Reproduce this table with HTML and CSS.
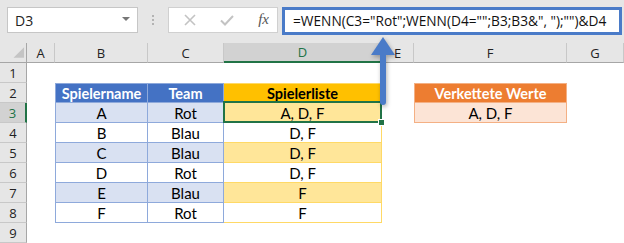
FILE: index.html
```html
<!DOCTYPE html>
<html lang="de">
<head>
    <meta charset="UTF-8">
    <title>WENN verketten</title>
    <link rel="stylesheet" href="styles.css">
</head>
<body>
    <div class="toolbar">
        <div class="namebox">
            <span>D3</span>
            <span class="caret"></span>
        </div>
        <div class="grip"><i></i><i></i><i></i></div>
        <div class="funcs">
            <svg width="12" height="12" viewBox="0 0 12 12"><path d="M1 1 L11 11 M11 1 L1 11" stroke="#c3c3c3" stroke-width="1.6" fill="none"/></svg>
            <svg width="14" height="11" viewBox="0 0 14 11"><path d="M1 5.5 L5 9.5 L13 1" stroke="#c3c3c3" stroke-width="2" fill="none"/></svg>
            <span class="fx">fx</span>
        </div>
        <div class="formula">=WENN(C3="Rot";WENN(D4="";B3;B3&amp;", ");"")&amp;D4</div>
    </div>

    <div class="sheet">
        <div class="corner"><svg width="27" height="20" viewBox="0 0 27 20"><polygon points="25,4 25,15 14,15" fill="#c4c4c4"/></svg></div>
        <div class="colhead">A</div>
        <div class="colhead">B</div>
        <div class="colhead">C</div>
        <div class="colhead active">D</div>
        <div class="colhead">E</div>
        <div class="colhead">F</div>
        <div class="colhead">G</div>

        <div class="rowhead">1</div>
        <div></div><div></div><div></div><div></div><div></div><div></div><div></div>

        <div class="rowhead">2</div>
        <div></div>
        <div class="t-blue head first top">Spielername</div>
        <div class="t-blue head top">Team</div>
        <div class="t-gold head top">Spielerliste</div>
        <div></div>
        <div class="t-orange head top">Verkettete Werte</div>
        <div></div>

        <div class="rowhead active">3</div>
        <div></div>
        <div class="t-blue band first">A</div>
        <div class="t-blue band">Rot</div>
        <div class="t-gold band current">A, D, F<span class="select"><span class="handle"></span></span></div>
        <div></div>
        <div class="t-orange">A, D, F</div>
        <div></div>

        <div class="rowhead">4</div>
        <div></div>
        <div class="t-blue first">B</div>
        <div class="t-blue">Blau</div>
        <div class="t-gold">D, F</div>
        <div></div><div></div><div></div>

        <div class="rowhead">5</div>
        <div></div>
        <div class="t-blue band first">C</div>
        <div class="t-blue band">Blau</div>
        <div class="t-gold band">D, F</div>
        <div></div><div></div><div></div>

        <div class="rowhead">6</div>
        <div></div>
        <div class="t-blue first">D</div>
        <div class="t-blue">Rot</div>
        <div class="t-gold">D, F</div>
        <div></div><div></div><div></div>

        <div class="rowhead">7</div>
        <div></div>
        <div class="t-blue band first">E</div>
        <div class="t-blue band">Blau</div>
        <div class="t-gold band">F</div>
        <div></div><div></div><div></div>

        <div class="rowhead">8</div>
        <div></div>
        <div class="t-blue first">F</div>
        <div class="t-blue">Rot</div>
        <div class="t-gold">F</div>
        <div></div><div></div><div></div>

        <div class="rowhead">9</div>
        <div></div><div></div><div></div><div></div><div></div><div></div><div></div>
    </div>

    <!-- Pfeil von der Formel zur Zelle D3 -->
    <svg class="arrow" width="30" height="74" viewBox="0 0 30 74">
        <polygon points="13,1 25,19 1,19" fill="#4a7bc8"/>
        <path d="M10 18 H16 V66 A3 3 0 0 1 10 66 Z" fill="#4a7bc8"/>
    </svg>
</body>
</html>
```

FILE: styles.css
```css
* {
    box-sizing: border-box;
}
body {
    margin: 0;
    width: 624px;
    height: 243px;
    overflow: hidden;
    position: relative;
    background: #fff;
    font-family: "Open Sans", "Noto Sans", sans-serif;
}

/* Namenfeld und Bearbeitungsleiste */
.toolbar {
    height: 43px;
    background: #e6e6e6;
    display: flex;
    align-items: flex-start;
    padding: 7px 0 0 7px;
}
.namebox {
    width: 131px;
    height: 26px;
    background: #fff;
    border: 1px solid #c6c6c6;
    display: flex;
    align-items: center;
    justify-content: space-between;
    padding: 0 7px 0 7px;
    font-size: 14px;
    color: #222;
}
.caret {
    width: 0;
    height: 0;
    border-left: 4px solid transparent;
    border-right: 4px solid transparent;
    border-top: 4px solid #777;
    margin-top: -3px;
}
.grip {
    width: 30px;
    height: 26px;
    display: flex;
    flex-direction: column;
    align-items: center;
    justify-content: center;
    gap: 2px;
}
.grip i {
    width: 2px;
    height: 2px;
    background: #b3b3b3;
}
.funcs {
    width: 110px;
    height: 26px;
    background: #fff;
    border: 1px solid #d0d0d0;
    display: flex;
    align-items: center;
    justify-content: space-between;
    padding: 0 8px 0 15px;
}
.fx {
    font-family: "Liberation Serif", serif;
    font-style: italic;
    font-size: 15px;
    color: #555;
    margin-top: -2px;
}
.formula {
    margin-left: 4px;
    width: 340px;
    height: 28px;
    background: #fff;
    border: 3px solid #4a7bc8;
    font-size: 13.7px;
    line-height: 22px;
    padding-left: 8px;
    color: #111;
    white-space: nowrap;
}

/* Tabellenblatt */
.sheet {
    display: grid;
    grid-template-columns: 27px 28px 93px 76px 158px 32px 153px 57px;
    grid-auto-rows: 20px;
    font-family: Lato, "Open Sans", sans-serif;
    font-size: 15px;
    color: #000;
}
.sheet > div {
    display: flex;
    align-items: center;
    justify-content: center;
    white-space: nowrap;
}
.corner {
    background: #e6e6e6;
    border-right: 1px solid #a6a6a6;
    border-bottom: 1px solid #a6a6a6;
}
.colhead {
    background: #e6e6e6;
    border-right: 1px solid #c8c8c8;
    border-bottom: 1px solid #a6a6a6;
    font-family: "Open Sans", sans-serif;
    font-size: 13px;
    color: #222;
}
.colhead.active {
    background: #d2d2d2;
    border-bottom: 2px solid #217346;
    color: #217346;
}
.rowhead {
    background: #e6e6e6;
    border-right: 1px solid #a6a6a6;
    border-bottom: 1px solid #c8c8c8;
    font-family: "Open Sans", sans-serif;
    font-size: 13px;
    color: #222;
}
.rowhead.active {
    background: #d2d2d2;
    border-right: 2px solid #217346;
    color: #217346;
}

/* Formatierte Tabellen */
.t-blue {
    border-right: 1px solid #8ea9db;
    border-bottom: 1px solid #8ea9db;
}
.t-blue.first {
    border-left: 1px solid #8ea9db;
}
.t-blue.band {
    background: #d9e1f2;
}
.t-blue.head {
    background: #4472c4;
    color: #fff;
}
.t-gold {
    border-right: 1px solid #ffd966;
    border-bottom: 1px solid #ffd966;
}
.t-gold.band {
    background: #ffe699;
}
.t-gold.head {
    background: #ffc000;
}
.t-orange {
    background: #fce4d6;
    border: 1px solid #f4b084;
    border-top: none;
}
.t-orange.head {
    background: #ed7d31;
    color: #fff;
    border-top: 1px solid #f4b084;
}
.head {
    font-weight: bold;
    font-size: 14.5px;
}
.top {
    border-top: 1px solid #8ea9db;
}
.t-gold.top {
    border-top: 1px solid #ffd966;
}

/* Markierte Zelle */
.current {
    position: relative;
}
.select {
    position: absolute;
    top: -2px;
    left: -1px;
    right: -1px;
    bottom: -1px;
    border: 2px solid #217346;
}
.handle {
    position: absolute;
    right: -5px;
    bottom: -5px;
    width: 7px;
    height: 7px;
    background: #217346;
    border: 1px solid #fff;
}

.arrow {
    position: absolute;
    left: 370px;
    top: 36px;
    filter: drop-shadow(1px 2px 2px rgba(0, 0, 0, 0.3));
}
```
